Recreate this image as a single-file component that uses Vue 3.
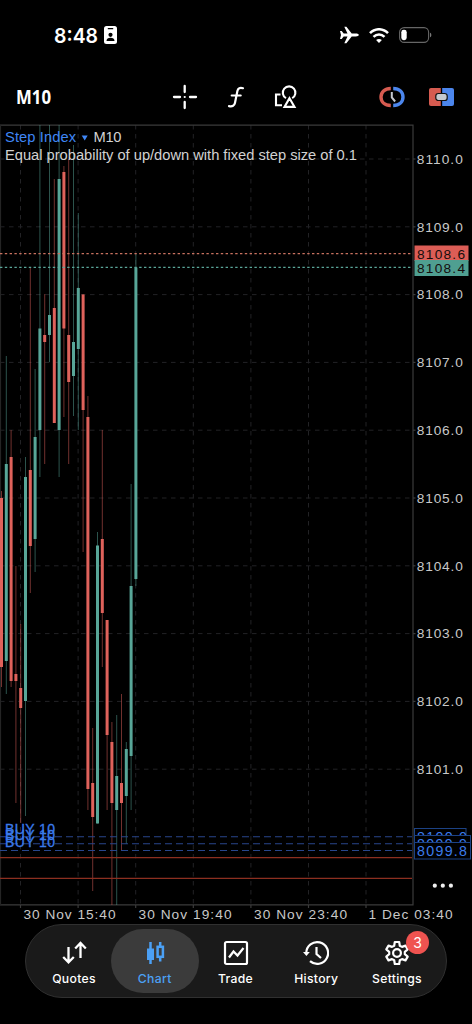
<template>
  <div class="screen">
    <header class="status">
      <div class="clock">
        <svg class="clock-text" width="46" height="24"><text x="0" y="19.5" textLength="44" lengthAdjust="spacingAndGlyphs">8:48</text></svg>
        <svg class="badge-icon" width="13" height="18" viewBox="0 0 13 18">
          <rect width="13" height="18" rx="2.5" fill="#fff" />
          <rect x="3.7" y="2" width="5.6" height="1.3" rx=".6" fill="#000" />
          <circle cx="6.5" cy="8.8" r="2.1" fill="#000" />
          <path d="M2.5 15c0-2.2 1.6-3.2 4-3.2s4 1 4 3.2z" fill="#000" />
        </svg>
      </div>
      <div class="signals">
        <svg width="19" height="18" viewBox="0 0 19 18">
          <path d="M0 5h1.7l2 2.6h3.8L4.3.8h2.1l5.3 6.8h4.1c1.8 0 3 .6 3 1.4s-1.2 1.4-3 1.4h-4.1l-5.3 6.800H4.3l3.200-6.800H3.700l-2 2.600H0L1 9z" fill="#fff" />
        </svg>
        <svg width="20" height="15" viewBox="0 0 20 15" fill="none" stroke="#fff" stroke-width="2.5">
          <path d="M1 5.2C6-.1 14-.1 19 5.2M4.5 8.8c3.2-3.2 7.8-3.2 11 0" />
          <path d="M10 15l-2.9-3c1.7-1.5 4.1-1.5 5.8 0z" fill="#fff" stroke="none" />
        </svg>
        <svg width="33" height="16" viewBox="0 0 33 16">
          <rect x=".6" y=".6" width="29" height="14.8" rx="4.6" fill="none" stroke="#666" stroke-width="1.1" />
          <rect x="2.3" y="2.8" width="5.4" height="10.4" rx="2.4" fill="#fff" />
          <path d="M31 5.7c1.8.5 1.8 4.1 0 4.6z" fill="#777" />
        </svg>
      </div>
    </header>

    <nav class="toolbar">
      <svg class="period" width="37" height="26"><text x="0" y="20" textLength="35" lengthAdjust="spacingAndGlyphs">M10</text></svg>
      <div class="tools">
        <svg width="26" height="26" viewBox="0 0 26 26" stroke="#fff" stroke-width="2.3" stroke-linecap="round">
          <path d="M12.7 2v6M12.7 18v6M2 13h6M18 13h6" />
          <path d="M12.7 13h.01" stroke-width="2.2" />
        </svg>
        <svg width="18" height="24" viewBox="0 0 18 24" fill="none" stroke="#fff" stroke-width="2.2" stroke-linecap="round">
          <path d="M16 3.2c-3-.9-5-.1-5.6 2.8L8 17.8c-.6 3-2.5 4-6 3.3M4.7 10.5h9" />
        </svg>
        <svg width="24" height="24" viewBox="0 0 24 24" fill="none" stroke="#fff" stroke-width="2.1">
          <path d="M6.5 9.5H2v10.7h6M12 13.2a6.3 6.3 0 1 1 6.2 0M15.5 13.2l5 8.7h-10z" />
        </svg>
      </div>
      <div class="trade-tools">
        <svg width="26" height="22" viewBox="0 0 26 22" fill="none">
          <path d="M11.8 2.5C5.5 2.5 2 6.2 2 11s3.5 8.5 9.8 8.5" stroke="#d65b50" stroke-width="3.4" />
          <path d="M14.2 2.5C20.5 2.5 24 6.2 24 11s-3.5 8.5-9.8 8.5" stroke="#4c86ed" stroke-width="3.4" />
          <path d="M12.8 6v5.5l3.3 4" stroke="#c5c9cf" stroke-width="2" />
        </svg>
        <svg width="25" height="18" viewBox="0 0 25 18">
          <path d="M2 0h9.8v18H2a2 2 0 0 1-2-2V2a2 2 0 0 1 2-2z" fill="#d65b50" />
          <path d="M13.2 0H23a2 2 0 0 1 2 2v14a2 2 0 0 1-2 2h-9.8z" fill="#4c86ed" />
          <rect x="6.8" y="5.5" width="11.4" height="7" rx="2.6" fill="#c5c9cf" stroke="#111" stroke-width="1.2" />
        </svg>
      </div>
    </nav>

    <main class="chart">
      <svg width="472" height="802" viewBox="0 124 472 802">
        <defs>
          <clipPath id="plot"><rect x="0" y="125" width="412" height="780" /></clipPath>
        </defs>
        <g class="grid">
          <line v-for="x in gridX" :key="x" :x1="x" :x2="x" y1="125" y2="905" />
          <line v-for="p in prices" :key="p" x1="0" x2="412" :y1="priceY(p)" :y2="priceY(p)" />
        </g>
        <path class="frame" d="M0 125.2H413V904.8H0" />
        <path class="frame left" d="M.5 125V905" />
        <path v-for="x in gridX" :key="'t' + x" class="ticks" :d="`M${x} 905v3`" />
        <path v-for="p in prices" :key="'t' + p" class="ticks" :d="`M413 ${priceY(p)}h2.5`" />

        <g clip-path="url(#plot)">
          <g v-for="(c, i) in candles" :key="i" :class="c[0] === 'u' ? 'up' : 'down'">
            <rect class="wick" :x="candleX(i) - 0.5" :y="c[1]" width="1" :height="c[4] - c[1]" />
            <rect :x="candleX(i) - 1.5" :y="c[2]" width="3" :height="c[3] - c[2]" />
          </g>
        </g>

        <path class="ask" d="M0 253.7H412" />
        <path class="bid" d="M0 267.4H412" />
        <path class="position" d="M0 836.8H412M0 843.7H412M0 850.5H412" />
        <path class="stop" d="M0 857.7H412M0 878.3H412" />
        <g class="buy">
          <text v-for="y in [833.7, 840.3, 847]" :key="y" x="5" :y="y" textLength="50">BUY 10</text>
        </g>

        <text class="symbol" x="5" y="142.3" textLength="71">Step Index</text>
        <path d="M81.7 135.5h6l-3 5z" fill="#3f86f5" />
        <text class="title" x="93.5" y="142.3" textLength="28">M10</text>
        <text class="title" x="5" y="160.2" textLength="352">Equal probability of up/down with fixed step size of 0.1</text>

        <text v-for="p in prices" :key="'l' + p" class="axis" x="416.8" :y="priceY(p) + 4.7" textLength="46">{{ p.toFixed(1) }}</text>
        <rect x="414.5" y="245.5" width="54" height="15.5" fill="#dc5d56" />
        <rect x="414.5" y="260" width="54" height="16" fill="#4f9f91" />
        <text class="axis dark" x="417" y="258.8" textLength="48">8108.6</text>
        <text class="axis dark" x="417" y="272.6" textLength="48">8108.4</text>

        <g v-for="t in positionTags" :key="t.label" class="tag">
          <rect x="414.5" :y="t.y" :width="t.width" height="16.5" />
          <text x="417" :y="t.y + 13" textLength="50">{{ t.label }}</text>
        </g>
        <g fill="#eee">
          <circle cx="434.8" cy="885.7" r="2.1" />
          <circle cx="442.8" cy="885.7" r="2.1" />
          <circle cx="450.9" cy="885.7" r="2.1" />
        </g>
        <text v-for="t in times" :key="t.label" class="axis" :x="t.x" y="919.2" :textLength="t.width">{{ t.label }}</text>
      </svg>
    </main>

    <nav class="tabs">
      <div v-for="tab in tabs" :key="tab" class="tab" :class="{ active: tab === 'Chart' }">
        <svg v-if="tab === 'Quotes'" width="26" height="26" viewBox="0 0 26 26" fill="none" stroke="#fff" stroke-width="2.3">
          <path d="M7.5 7v15M2.2 17l5.3 5.3 5.3-5.3M19.5 18V3M14.2 8.5l5.3-5.5 5.3 5.5" />
        </svg>
        <svg v-if="tab === 'Chart'" width="26" height="26" viewBox="0 0 26 26" fill="none" stroke="#4ba0f5">
          <path d="M8.5 2v22M18.2 2v4M18.2 17v4.5" stroke-width="2.5" />
          <rect x="5" y="8.5" width="7" height="11.5" fill="#4ba0f5" stroke="none" />
          <rect x="15.6" y="6.8" width="5.3" height="10" stroke-width="2.5" />
        </svg>
        <svg v-if="tab === 'Trade'" width="26" height="26" viewBox="0 0 26 26" fill="none" stroke="#fff" stroke-width="2.2">
          <rect x="2" y="2" width="22" height="22" rx="1.5" />
          <path d="M6 17.5l4.5-6 4 4L20.5 8" />
        </svg>
        <svg v-if="tab === 'History'" width="26" height="26" viewBox="0 0 26 26" fill="none" stroke="#fff" stroke-width="2.2">
          <path d="M3.3 13A10.9 10.9 0 1 1 7 21.2M13.5 7v7l4.5 4" />
          <path d="M0 12h6.8l-3.4 4z" fill="#fff" stroke="none" />
        </svg>
        <svg v-if="tab === 'Settings'" width="26" height="26" viewBox="0 0 26 26" fill="none" stroke="#fff" stroke-width="2.2" stroke-linejoin="round">
          <path d="M10.8 2h4.4l.6 3.7 2.2 1.2 3.5-1.3 2.2 3.8-2.9 2.4v2.4l2.9 2.4-2.2 3.8-3.5-1.3-2.2 1.2-.6 3.7h-4.4l-.6-3.7L8 19.1l-3.5 1.3-2.2-3.8 2.9-2.4v-2.4L2.3 9.4l2.2-3.8L8 6.9l2.2-1.2z" />
          <circle cx="13" cy="13" r="3.9" />
        </svg>
        <span class="label">{{ tab }}</span>
        <span v-if="tab === 'Settings'" class="count">3</span>
      </div>
    </nav>
  </div>
</template>

<script setup>
const tabs = ['Quotes', 'Chart', 'Trade', 'History', 'Settings']
const prices = [8110, 8109, 8108, 8107, 8106, 8105, 8104, 8103, 8102, 8101]
const gridX = [20.5, 78.1, 135.7, 193.3, 250.9, 308.5, 366]
const times = [
  { label: '30 Nov 15:40', x: 23.5, width: 92 },
  { label: '30 Nov 19:40', x: 138.5, width: 93 },
  { label: '30 Nov 23:40', x: 254, width: 93 },
  { label: '1 Dec 03:40', x: 368.5, width: 84 },
]
const positionTags = [
  { label: '8100.0', y: 828.5, width: 51.5 },
  { label: '8099.9', y: 835.5, width: 56 },
  { label: '8099.8', y: 842.5, width: 56 },
]

// direction, high, body top, body bottom, low
const candles = [
  ['d', 491, 498, 667, 687],
  ['u', 356, 464, 661, 694],
  ['d', 430, 457, 681, 687],
  ['d', 566, 674, 681, 803],
  ['d', 624, 688, 708, 823],
  ['u', 457, 477, 701, 816],
  ['d', 268, 470, 546, 593],
  ['u', 369, 437, 539, 572],
  ['u', 125, 328.5, 430, 477],
  ['d', 294, 335, 342, 464],
  ['u', 125, 315, 335, 362],
  ['d', 179, 308, 423, 423],
  ['u', 125, 179, 430, 477],
  ['d', 166, 172, 328.5, 417],
  ['d', 159, 335, 382, 464],
  ['u', 145, 342, 376, 416],
  ['u', 213, 288, 349, 430],
  ['d', 294, 294.5, 410, 552],
  ['d', 396, 417, 789, 810],
  ['d', 728, 783, 817, 891],
  ['u', 532, 545.5, 823.5, 823.5],
  ['d', 430, 539, 613, 667],
  ['d', 620, 620, 735, 810],
  ['d', 722, 742, 803, 905],
  ['u', 715, 776, 810, 905],
  ['d', 694, 783, 803, 850],
  ['u', 742, 749, 796, 844],
  ['u', 484, 586, 756, 810],
  ['u', 254, 267.5, 579, 586],
]

const candleX = (i) => 1.5 + i * 4.8
const priceY = (p) => 159 + (8110 - p) * 67.8
</script>

<style>
body {
  background: #000;
}
</style>

<style scoped>
.screen {
  width: 472px;
  height: 1024px;
  box-sizing: border-box;
  overflow: hidden;
  background: #000;
  color: #fff;
  font-family: "Liberation Sans", Arial, sans-serif;
}

svg {
  display: block;
  flex: none;
}

.status {
  height: 70px;
  display: flex;
  align-items: center;
  justify-content: space-between;
  padding: 0 40px 0 54px;
  box-sizing: border-box;
}

.clock {
  display: flex;
  align-items: center;
  gap: 4px;
}

.clock-text {
  font: 600 20.5px Inter, sans-serif;
  fill: #fff;
  overflow: visible;
}

.signals {
  display: flex;
  align-items: center;
  gap: 10px;
}

.toolbar {
  height: 54px;
  display: flex;
  align-items: center;
  padding: 0 18px 0 16px;
}

.period {
  font: 700 20px "Open Sans", sans-serif;
  fill: #fff;
  overflow: visible;
}

.tools {
  display: flex;
  align-items: center;
  gap: 29px;
  margin-left: 119px;
}

.trade-tools {
  display: flex;
  align-items: center;
  gap: 24px;
  margin-left: auto;
}

.chart {
  height: 802px;
}

.grid line {
  stroke: #222225;
  stroke-width: 1;
  stroke-dasharray: 4.5 4.5;
}

.frame,
.ticks {
  fill: none;
  stroke: #3b3b3b;
  stroke-width: 1.2;
}

.left {
  stroke: #242424;
}

.up {
  fill: #58a698;
}

.down {
  fill: #df625b;
}

.wick {
  opacity: 0.5;
}

.ask,
.bid {
  stroke: #c8715f;
  stroke-width: 1.3;
  stroke-dasharray: 2.4 2.4;
}

.bid {
  stroke: #5aa699;
}

.position {
  stroke: #28468c;
  stroke-width: 1.1;
  stroke-dasharray: 7 4;
}

.stop {
  stroke: #8c2f20;
  stroke-width: 1.3;
}

.buy {
  font-size: 14px;
  fill: #3b7bea;
  stroke: #3b7bea;
  stroke-width: 0.3;
}

.symbol,
.title {
  font-size: 14.7px;
  fill: #d2d2d2;
}

.symbol {
  fill: #3f86f5;
}

.axis {
  font-size: 13.7px;
  fill: #c8c8c8;
}

.dark {
  fill: #150d0c;
}

.tag rect {
  fill: #000;
  stroke: #1c4285;
}

.tag text {
  font-size: 14.2px;
  fill: #3b7bea;
}

.tabs {
  width: 422px;
  height: 74px;
  box-sizing: border-box;
  margin: -2px 0 0 25px;
  padding: 4px 5px 4px 4px;
  border: 1px solid #303030;
  border-radius: 37px;
  background: #1a1a1a;
  display: flex;
  justify-content: space-between;
  position: relative;
}

.tab {
  width: 88px;
  height: 64px;
  margin-right: -8px;
  border-radius: 32px;
  display: flex;
  flex-direction: column;
  align-items: center;
  padding-top: 11px;
  box-sizing: border-box;
  position: relative;
}

.tab:last-child {
  margin-right: 0;
}

.active {
  background: #3b3b3b;
  color: #4ba0f5;
}

.label {
  font: 500 12.2px/15px Inter, sans-serif;
  letter-spacing: 0.3px;
  margin-top: 5px;
}

.count {
  position: absolute;
  top: 2px;
  left: 53px;
  width: 23px;
  height: 23px;
  border-radius: 50%;
  background: #ef5350;
  color: #fff;
  font: 14px/23px Inter, sans-serif;
  text-align: center;
}
</style>
